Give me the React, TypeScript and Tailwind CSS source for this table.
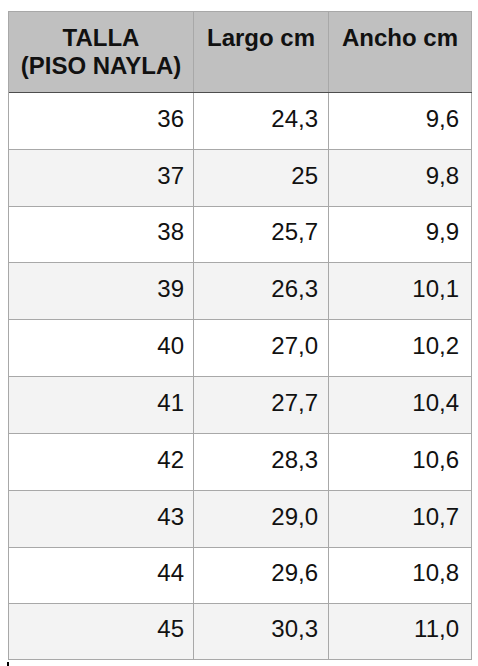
import React from 'react';

const rows = [
  { talla: '36', largo: '24,3', ancho: '9,6', h: 'h-[57px]' },
  { talla: '37', largo: '25', ancho: '9,8', h: 'h-[57px]' },
  { talla: '38', largo: '25,7', ancho: '9,9', h: 'h-[56px]' },
  { talla: '39', largo: '26,3', ancho: '10,1', h: 'h-[57px]' },
  { talla: '40', largo: '27,0', ancho: '10,2', h: 'h-[57px]' },
  { talla: '41', largo: '27,7', ancho: '10,4', h: 'h-[57px]' },
  { talla: '42', largo: '28,3', ancho: '10,6', h: 'h-[57px]' },
  { talla: '43', largo: '29,0', ancho: '10,7', h: 'h-[57px]' },
  { talla: '44', largo: '29,6', ancho: '10,8', h: 'h-[56px]' },
  { talla: '45', largo: '30,3', ancho: '11,0', h: 'h-[56px]' },
];

export default function App() {
  return (
    <div className="min-h-[666px] w-[478px] bg-white pt-[11px] text-[#111] font-['Liberation_Sans',Arial,sans-serif]">
      <div className="ml-[8px] w-[464px] border-l border-t border-[#a8a8a8]">
        {/* header */}
        <div className="grid h-[81px] grid-cols-[185px_135px_143px] bg-[#c0c0c0] border-b border-[#4d4d4d] text-[24px] leading-[28px] font-bold">
          <div className="border-r border-[#a8a8a8] pt-[12px] text-center">
            TALLA
            <br />
            (PISO NAYLA)
          </div>
          <div className="border-r border-[#a8a8a8] pt-[12px] text-center">Largo cm</div>
          <div className="border-r border-[#a8a8a8] pt-[12px] text-center">Ancho cm</div>
        </div>

        {rows.map((r, i) => (
          <div
            key={r.talla}
            className={`grid grid-cols-[185px_135px_143px] border-b border-[#a8a8a8] text-[24px] leading-[28px] ${r.h} ${i % 2 === 1 ? 'bg-[#f3f3f3]' : 'bg-white'}`}
          >
            <div className="flex items-center justify-end border-r border-[#a8a8a8] pr-[9px] pb-[5px]">{r.talla}</div>
            <div className="flex items-center justify-end border-r border-[#a8a8a8] pr-[10px] pb-[5px]">{r.largo}</div>
            <div className="flex items-center justify-end border-r border-[#a8a8a8] pr-[12px] pb-[5px]">{r.ancho}</div>
          </div>
        ))}
      </div>
      <div className="ml-[7px] mt-[2px] h-[4px] w-[2px] bg-black" />
    </div>
  );
}
